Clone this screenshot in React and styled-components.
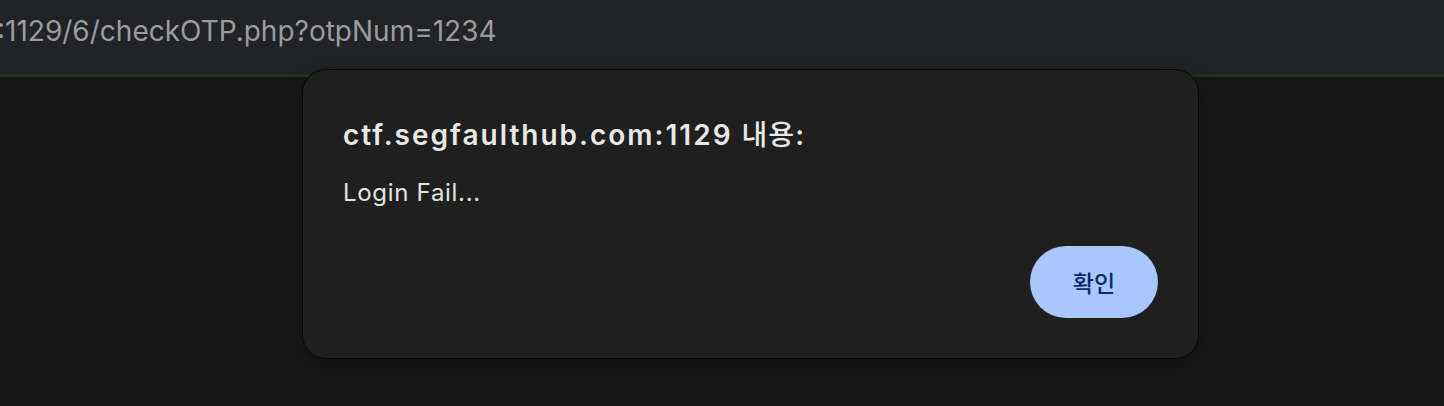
import React from 'react';
import styled, { createGlobalStyle } from 'styled-components';

const GlobalStyle = createGlobalStyle`
  html, body {
    margin: 0;
    padding: 0;
    background: #171717;
    font-family: Inter, "Noto Sans CJK KR", sans-serif;
  }
`;

const Page = styled.div`
  position: relative;
  width: 1444px;
  height: 406px;
  overflow: hidden;
  background: #171717;
`;

const AddressBar = styled.div`
  height: 77px;
  background: #222327;
  border-bottom: 2px solid #1b3a18;
  box-sizing: border-box;
  display: flex;
  align-items: flex-start;
`;

const Url = styled.div`
  margin-left: -3px;
  padding-top: 14px;
  font-size: 28px;
  line-height: 34px;
  color: #9b9c9e;
  white-space: nowrap;
`;

// alert box floats over the page, like Chrome's native dialog
const Dialog = styled.div`
  position: absolute;
  left: 302px;
  top: 69px;
  width: 897px;
  height: 290px;
  box-sizing: border-box;
  background: #1f1f1f;
  border: 1px solid #070707;
  border-radius: 24px;
  box-shadow: 0 6px 18px rgba(0, 0, 0, 0.25);
  padding: 48px 40px 40px 40px;
  display: flex;
  flex-direction: column;
`;

const Title = styled.div`
  font-size: 28px;
  font-weight: 600;
  color: #e8e8e8;
  line-height: 34px;
  letter-spacing: 2px;
`;

const Hangul = styled.span`
  font-weight: 500;
  letter-spacing: 1px;
`;

const Message = styled.div`
  margin-top: 26px;
  font-size: 24px;
  color: #e3e3e3;
  line-height: 30px;
  letter-spacing: 0.7px;
`;

const Actions = styled.div`
  margin-top: auto;
  display: flex;
  justify-content: flex-end;
`;

const OkButton = styled.button`
  width: 128px;
  height: 72px;
  border: none;
  border-radius: 36px;
  background: #a8c7fa;
  color: #0a2a66;
  font-family: "Noto Sans CJK KR", sans-serif;
  font-size: 23px;
  font-weight: 500;
  cursor: pointer;
`;

export default function App() {
  return (
    <Page>
      <GlobalStyle />
      <AddressBar>
        <Url>:1129/6/checkOTP.php?otpNum=1234</Url>
      </AddressBar>
      <Dialog>
        <Title>
          ctf.segfaulthub.com:1129 <Hangul>내용</Hangul>:
        </Title>
        <Message>Login Fail...</Message>
        <Actions>
          <OkButton>확인</OkButton>
        </Actions>
      </Dialog>
    </Page>
  );
}
